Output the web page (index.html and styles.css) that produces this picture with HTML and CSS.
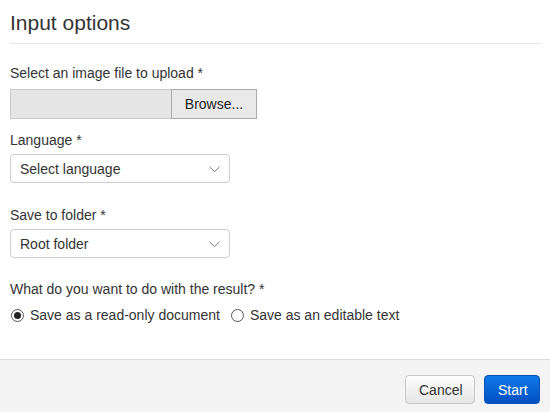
FILE: index.html
```html
<!DOCTYPE html>
<html>
<head>
<meta charset="utf-8">
<link rel="stylesheet" href="styles.css">
</head>
<body>
<div class="dialog">
  <div class="content">
    <h1 class="title">Input options</h1>
    <div class="field field-first">
      <div class="label">Select an image file to upload *</div>
      <div class="file">
        <div class="file-name"></div>
        <div class="file-btn">Browse...</div>
      </div>
    </div>
    <div class="field field-lang">
      <div class="label">Language *</div>
      <div class="select">
        <span>Select language</span>
        <svg class="chev" width="11" height="7" viewBox="0 0 11 7"><path d="M0.5 0.8 L5.5 5.6 L10.5 0.8" fill="none" stroke="#777" stroke-width="1"/></svg>
      </div>
    </div>
    <div class="field field-folder">
      <div class="label">Save to folder *</div>
      <div class="select">
        <span>Root folder</span>
        <svg class="chev" width="11" height="7" viewBox="0 0 11 7"><path d="M0.5 0.8 L5.5 5.6 L10.5 0.8" fill="none" stroke="#777" stroke-width="1"/></svg>
      </div>
    </div>
    <div class="field field-result">
      <div class="label">What do you want to do with the result? *</div>
      <div class="radios">
        <label class="radio"><span class="dot checked"></span>Save as a read-only document</label>
        <label class="radio"><span class="dot"></span>Save as an editable text</label>
      </div>
    </div>
  </div>
  <div class="footer">
    <button class="btn btn-cancel">Cancel</button>
    <button class="btn btn-start">Start</button>
  </div>
</div>
</body>
</html>
```
FILE: styles.css
```css
html, body {
  margin: 0;
  padding: 0;
  background: #fff;
}
body {
  width: 550px;
  height: 412px;
  overflow: hidden;
  font-family: "Liberation Sans", Arial, sans-serif;
  font-size: 14px;
  color: #333;
}
.dialog {
  display: flex;
  flex-direction: column;
  height: 412px;
}
.content {
  padding: 0 10px;
  flex: 1;
}
.title {
  margin: 0;
  padding: 11px 0 8px;
  font-size: 21px;
  font-weight: normal;
  line-height: 24px;
  color: #333;
  border-bottom: 1px solid #e5e5e5;
}
.label {
  line-height: 20px;
  height: 20px;
}
.field-first { margin-top: 19px; }
.field-lang { margin-top: 11px; }
.field-folder { margin-top: 22px; }
.field-result { margin-top: 21px; }
.file {
  margin-top: 6px;
  display: flex;
  width: 247px;
  height: 30px;
}
.file-name {
  width: 160px;
  background: #e5e5e5;
  border: 1px solid #c8c8c8;
  border-right: none;
}
.file-btn {
  flex: 1;
  background: #e9e9e9;
  border: 1px solid #aaa;
  display: flex;
  align-items: center;
  justify-content: center;
  color: #222;
}
.select {
  margin-top: 4px;
  box-sizing: border-box;
  width: 220px;
  height: 29px;
  border: 1px solid #ccc;
  border-radius: 4px;
  display: flex;
  align-items: center;
  justify-content: space-between;
  padding: 0 9px 0 9px;
  color: #333;
}
.chev { display: block; margin-top: 1px; }
.radios {
  margin-top: 6px;
  display: flex;
  gap: 10px;
  line-height: 20px;
}
.radio {
  display: flex;
  align-items: center;
  gap: 6px;
}
.dot {
  box-sizing: border-box;
  width: 13px;
  height: 13px;
  border: 1px solid #555;
  border-radius: 50%;
  margin-left: 1px;
  display: flex;
  align-items: center;
  justify-content: center;
}
.dot.checked::after {
  content: "";
  width: 7px;
  height: 7px;
  border-radius: 50%;
  background: #222;
}
.footer {
  background: #f4f4f4;
  border-top: 1px solid #dcdcdc;
  display: flex;
  justify-content: flex-end;
  align-items: flex-start;
  padding: 15px 10px 0 0;
  gap: 9px;
  box-sizing: border-box;
  height: 53px;
}
.btn {
  font-family: "Liberation Sans", Arial, sans-serif;
  font-size: 14px;
  height: 29px;
  border-radius: 4px;
  padding: 0 13px;
  cursor: pointer;
}
.btn-cancel {
  width: 70px;
  background: linear-gradient(#fdfdfd, #e6e6e6);
  border: 1px solid #c6c6c6;
  color: #333;
}
.btn-start {
  width: 56px;
  background: linear-gradient(#1078e6, #0050c4);
  border: 1px solid #0452b4;
  color: #fff;
}
```
